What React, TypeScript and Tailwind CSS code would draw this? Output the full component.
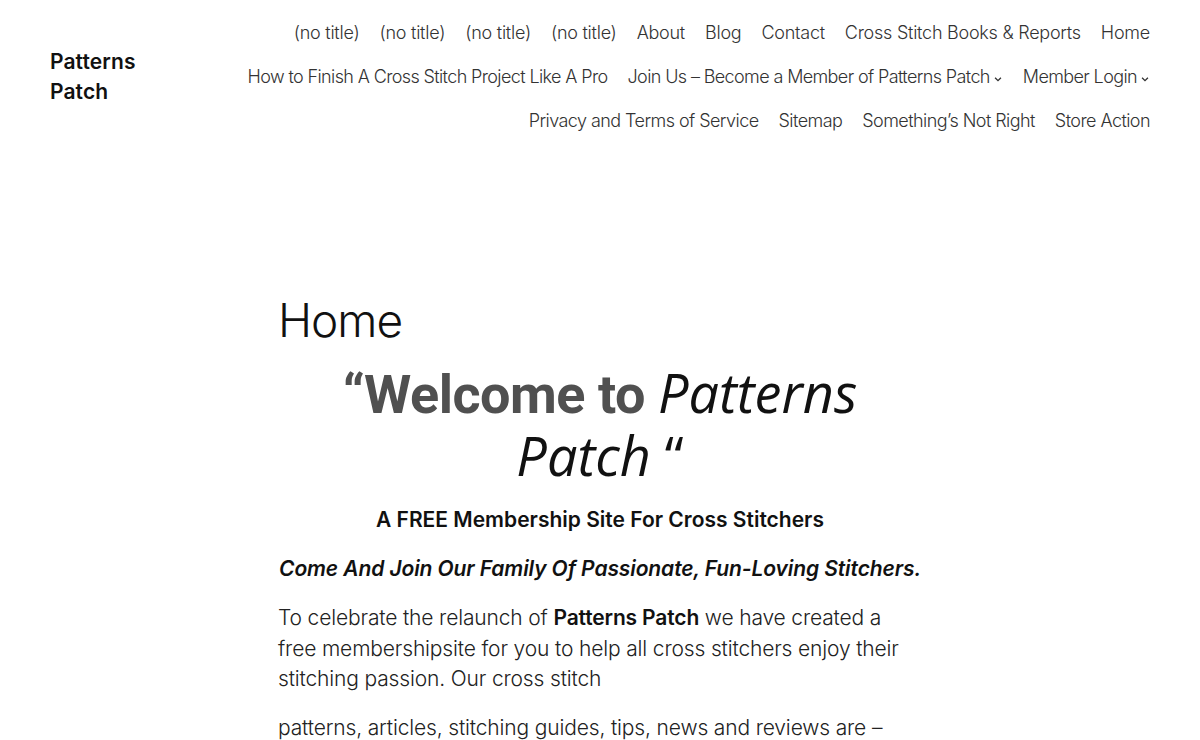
import React from 'react';

type NavItem = { label: string; caret?: boolean };

const navRows: { items: NavItem[]; tracking: string }[] = [
  {
    tracking: 'tracking-[-0.25px]',
    items: [
      { label: '(no title)' },
      { label: '(no title)' },
      { label: '(no title)' },
      { label: '(no title)' },
      { label: 'About' },
      { label: 'Blog' },
      { label: 'Contact' },
      { label: 'Cross Stitch Books & Reports' },
      { label: 'Home' },
    ],
  },
  {
    tracking: 'tracking-[-0.62px]',
    items: [
      { label: 'How to Finish A Cross Stitch Project Like A Pro' },
      { label: 'Join Us – Become a Member of Patterns Patch', caret: true },
      { label: 'Member Login', caret: true },
    ],
  },
  {
    tracking: 'tracking-[-0.56px]',
    items: [
      { label: 'Privacy and Terms of Service' },
      { label: 'Sitemap' },
      { label: 'Something’s Not Right' },
      { label: 'Store Action' },
    ],
  },
];

const Caret = () => (
  <svg width="10" height="10" viewBox="0 0 12 12" className="ml-[3px] mt-[3px]" fill="none">
    <path d="M2.5 4.5 6 8l3.5-3.5" stroke="currentColor" strokeWidth="1.6" />
  </svg>
);

export default function App() {
  return (
    <div className="min-h-screen bg-white text-[#111] font-['Inter',sans-serif]">
      <header className="flex justify-between items-start px-[50px] pt-[19px]">
        <a className="mt-[28px] w-[100px] text-[21px] leading-[30px] font-semibold tracking-[0.1px] text-[#111]">
          Patterns Patch
        </a>
        <nav className="flex flex-col items-end">
          {navRows.map((row, i) => (
            <ul key={i} className="flex gap-x-[20px] h-[44px] items-start">
              {row.items.map((item, j) => (
                <li
                  key={j}
                  className={`flex items-center text-[18px] leading-[28px] font-light text-[#333] ${row.tracking}`}
                >
                  {item.label}
                  {item.caret && <Caret />}
                </li>
              ))}
            </ul>
          ))}
        </nav>
      </header>

      <main className="mx-auto w-[644px] pt-[143px]">
        <h1 className="text-[46px] leading-[52px] font-light tracking-[-1px] text-[#111]">Home</h1>

        <h2 className="mt-[16px] text-center text-[54px] leading-[60px]">
          <span className="font-['Roboto',sans-serif] font-bold text-[#505050] tracking-[-0.5px]">“Welcome to </span>
          <em className="font-['Open_Sans',sans-serif] font-normal text-[#111]">
            Patterns
            <br />
            Patch{' '}
          </em>
          <span className="font-['Open_Sans',sans-serif] text-[#111]">“</span>
        </h2>

        <p className="mt-[18px] text-center text-[21px] leading-[30px] font-semibold text-[#111]">
          A FREE Membership Site For Cross Stitchers
        </p>

        <p className="mt-[19px] text-center text-[21px] leading-[30px] font-semibold italic tracking-[-0.1px] text-[#111]">
          Come And Join Our Family Of Passionate, Fun-Loving Stitchers.
        </p>

        <p className="mt-[19px] text-[21px] leading-[30.5px] font-light tracking-[-0.15px] text-[#222]">
          To celebrate the relaunch of <strong className="font-semibold text-[#111]">Patterns Patch</strong> we have created a
          <br />
          free membershipsite for you to help all cross stitchers enjoy their
          <br />
          stitching passion. Our cross stitch
        </p>

        <p className="mt-[18px] text-[21px] leading-[30.5px] font-light tracking-[-0.15px] text-[#222]">
          patterns, articles, stitching guides, tips, news and reviews are –
        </p>
      </main>
    </div>
  );
}
